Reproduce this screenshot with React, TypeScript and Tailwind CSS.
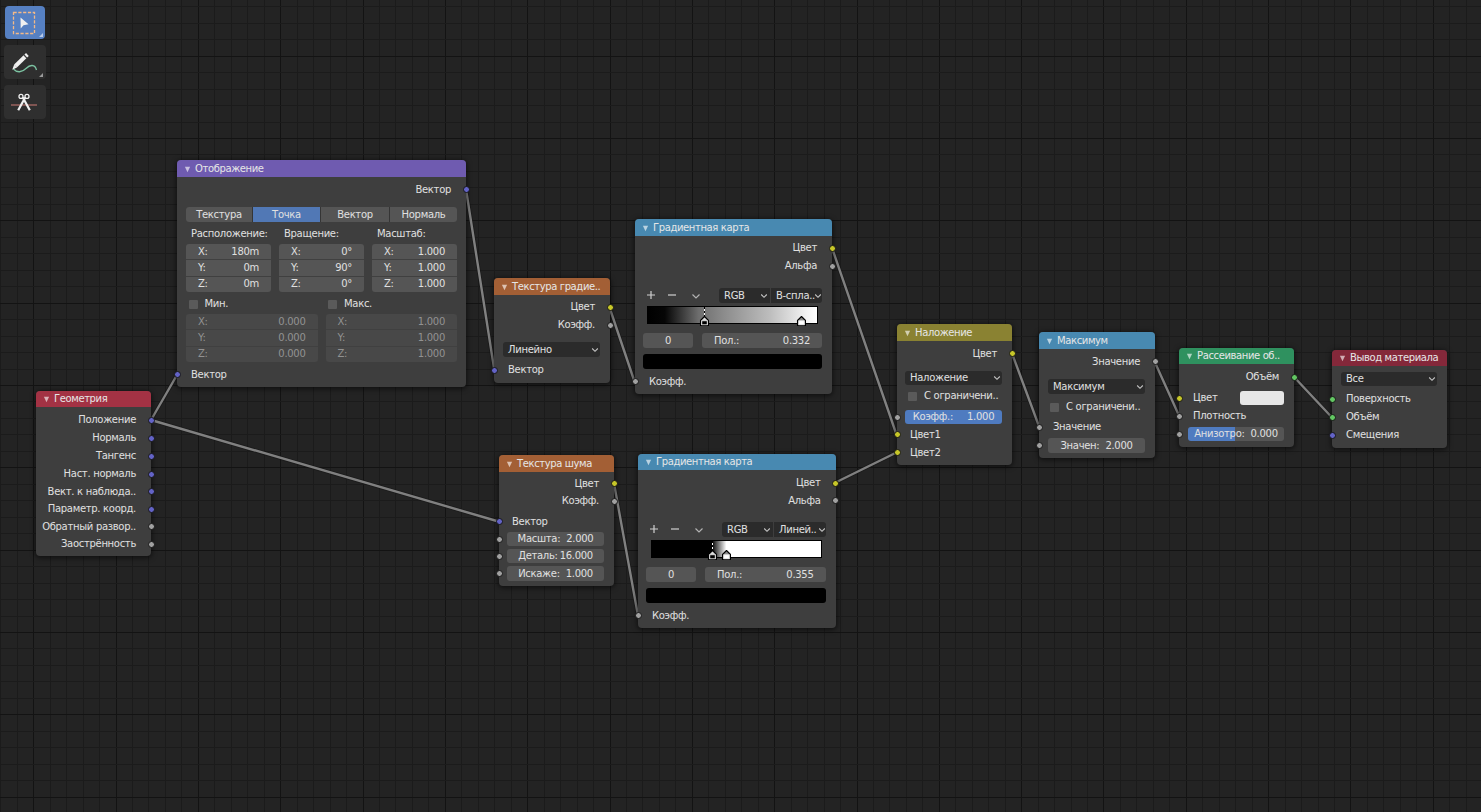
import type { ReactNode } from 'react';
import clsx from 'clsx';

const WIDTH = 1481;
const HEIGHT = 812;
const GRID = 82.33;

// socket colours
const VECTOR = 'bg-[#6363c7]';
const VALUE = 'bg-[#a1a1a1]';
const COLOR = 'bg-[#c7c729]';
const SHADER = 'bg-[#63c763]';

// [x1, y1, x2, y2] of every noodle
const links = [
  [151, 420, 177, 375],
  [151, 420, 498.5, 521.5],
  [466, 189.5, 494.5, 371],
  [609.5, 307.5, 634.5, 381.5],
  [614, 483.5, 638, 615.5],
  [832, 248, 896.5, 434.5],
  [835.5, 482.5, 896.5, 452.5],
  [1012, 353.5, 1039.5, 427.5],
  [1154.5, 361.5, 1179, 415.5],
  [1294.5, 377.5, 1332, 417.5],
];

function Grid() {
  const vertical = [];
  const horizontal = [];
  for (let i = -2; i <= 90; i++) {
    vertical.push({ p: Math.round(33.2 + (i * GRID) / 5), major: i % 5 === 0 });
    horizontal.push({ p: Math.round(55.7 + ((i - 5) * GRID) / 5), major: i % 5 === 0 });
  }
  return (
    <svg width={WIDTH} height={HEIGHT} className="absolute inset-0" shapeRendering="crispEdges">
      {vertical.map((l, i) => (
        <rect key={i} x={l.p} y={0} width={1} height={HEIGHT} fill={l.major ? '#131313' : '#1b1b1b'} />
      ))}
      {horizontal.map((l, i) => (
        <rect key={i} x={0} y={l.p} width={WIDTH} height={1} fill={l.major ? '#131313' : '#1b1b1b'} />
      ))}
    </svg>
  );
}

function Links() {
  return (
    <svg width={WIDTH} height={HEIGHT} className="absolute inset-0">
      {links.map(([x1, y1, x2, y2], i) => (
        <g key={i} strokeLinecap="round">
          <line x1={x1} y1={y1} x2={x2} y2={y2} stroke="#161616" strokeWidth={4} strokeOpacity={0.6} />
          <line x1={x1} y1={y1} x2={x2} y2={y2} stroke="#808080" strokeWidth={2.4} />
        </g>
      ))}
    </svg>
  );
}

function Node({ title, className, header, children }: { title: string; className: string; header: string; children: ReactNode }) {
  return (
    <div className={clsx('absolute flex flex-col rounded-[4px] bg-[#3e3e3e] shadow-[0_1px_5px_1px_rgba(0,0,0,0.55)]', className)}>
      <div className={clsx('flex shrink-0 items-center whitespace-nowrap rounded-t-[4px] pl-[7px] tracking-[-0.38px] text-[#e6e6e6]', header)}>
        <svg width="7" height="7" viewBox="0 0 7 7" className="mr-[4px] mt-px shrink-0">
          <path d="M0.9 0.8 H6.1 L3.5 6.2 Z" fill="#fff" fillOpacity="0.62" />
        </svg>
        {title}
      </div>
      {children}
    </div>
  );
}

function Socket({ side, color }: { side: 'left' | 'right'; color: string }) {
  return (
    <span
      className={clsx(
        'absolute top-1/2 -mt-[3.5px] size-[7px] rounded-full border border-[#161616]',
        side === 'left' ? '-left-[3.5px]' : '-right-[3.5px]',
        color
      )}
    />
  );
}

function Output({ label, color, className = 'h-[18px]' }: { label: string; color: string; className?: string }) {
  return (
    <div className={clsx('relative flex shrink-0 items-center justify-end whitespace-nowrap pr-[15px]', className)}>
      {label}
      <Socket side="right" color={color} />
    </div>
  );
}

function Input({ label, color, className = 'h-[18px]', children }: { label: string; color: string; className?: string; children?: ReactNode }) {
  return (
    <div className={clsx('relative flex shrink-0 items-center pl-[14px]', className)}>
      {label}
      {children}
      <Socket side="left" color={color} />
    </div>
  );
}

function Chevron({ className }: { className?: string }) {
  return (
    <svg width="8" height="6" viewBox="0 0 8 6" fill="none" className={clsx('shrink-0', className)}>
      <path d="M1.2 1.5 L4 4.3 L6.8 1.5" stroke="#c4c4c4" strokeWidth="1.1" />
    </svg>
  );
}

function Dropdown({ label, className }: { label: string; className: string }) {
  return (
    <div className={clsx('ml-[9px] mr-[10px] flex shrink-0 items-center justify-between rounded-[3px] bg-[#2b2b2b] pl-[5px] pr-px', className)}>
      {label}
      <Chevron />
    </div>
  );
}

function Checkbox({ label, className }: { label: string; className?: string }) {
  return (
    <div className={clsx('flex shrink-0 items-center whitespace-nowrap', className)}>
      <span className="mr-[7px] size-[9px] shrink-0 rounded-[1px] bg-[#5a5a5a]" />
      {label}
    </div>
  );
}

// Slider with its socket on the left edge of the node
function Slider({ label, value, className, field = 'bg-[#555555]' }: { label: string; value: string; className: string; field?: string }) {
  return (
    <div className={clsx('relative flex shrink-0 pl-[9px] pr-[10px]', className)}>
      <div className={clsx('flex grow items-center justify-center gap-[6px] whitespace-nowrap rounded-[3px]', field)}>
        <span>{label}</span>
        <span>{value}</span>
      </div>
      <Socket side="left" color={VALUE} />
    </div>
  );
}

function Vector({ values, disabled }: { values: string[]; disabled?: boolean }) {
  return (
    <div className="flex grow basis-0 flex-col gap-px overflow-hidden rounded-[3px] bg-[#404040]">
      {['X:', 'Y:', 'Z:'].map((axis, i) => (
        <div
          key={axis}
          className={clsx('flex h-[15.33px] items-center justify-between pl-[12px] pr-[12px]', disabled ? 'bg-[#484848] text-[#929292]' : 'bg-[#555555]')}
        >
          <span>{axis}</span>
          <span>{values[i]}</span>
        </div>
      ))}
    </div>
  );
}

function Marker({ fill, tip, line }: { fill: string; tip: string; line?: boolean }) {
  return (
    <svg width="10" height="20" viewBox="0 0 10 20" className="block">
      {line && <path d="M5.5 0 V10" stroke="#fff" strokeWidth="1" />}
      {line && <path d="M5.5 0 V10" stroke="#000" strokeWidth="1" strokeDasharray="2 2" />}
      <path d="M1.5 13.5 L5.5 9.5 L9.5 13.5 V18.5 H1.5 Z" fill={tip} stroke="#000" strokeWidth="1.1" strokeLinejoin="round" />
      <rect x="2.8" y="13.8" width="5.4" height="4" fill={fill} stroke="#e4e4e4" strokeWidth="0.8" />
    </svg>
  );
}

interface RampProps {
  className: string;
  header: string;
  alpha: string;
  bar: string;
  mode: string;
  gradient: string;
  stops: [string, string];
  position: string;
}

function ColorRamp({ className, header, alpha, bar, mode, gradient, stops, position }: RampProps) {
  return (
    <Node title="Градиентная карта" className={className} header={header}>
      <Output label="Цвет" color={COLOR} className="mt-[3px] h-[18px]" />
      <Output label="Альфа" color={VALUE} className={alpha} />
      <div className="mt-[13px] flex h-[15px] items-center pl-[11px] pr-[10px]">
        <svg width="62" height="11" viewBox="0 0 62 11" fill="none" stroke="#d0d0d0" strokeWidth="1.2" className="shrink-0">
          <path d="M1 5 H9 M5 1 V9" />
          <path d="M22 5 H30" />
          <path d="M46.5 4.5 L50 8 L53.5 4.5" strokeOpacity="0.8" />
        </svg>
        <div className="ml-[11px] flex h-[15px] grow gap-px overflow-hidden whitespace-nowrap rounded-[3px]">
          <div className="flex w-[51px] shrink-0 items-center justify-between bg-[#2b2b2b] pl-[5px] pr-[2px]">
            RGB
            <Chevron />
          </div>
          <div className="flex grow items-center justify-between bg-[#2b2b2b] pl-[5px]">
            {mode}
            <Chevron className="-ml-px" />
          </div>
        </div>
      </div>
      <div className={clsx('relative mt-[3px] h-[18px] w-[171px] shrink-0 border border-black', bar)} style={{ background: gradient }}>
        <span className={clsx('absolute top-0', stops[0])}>
          <Marker fill="#000" tip="#ddd" line />
        </span>
        <span className={clsx('absolute top-0', stops[1])}>
          <Marker fill="#fff" tip="#8a8a8a" />
        </span>
      </div>
      <div className="mt-[9px] flex h-[15px] gap-[9px] pl-[8px] pr-[10px]">
        <div className="flex w-[50px] items-center justify-center rounded-[3px] bg-[#555555]">0</div>
        <div className="flex grow items-center justify-between rounded-[3px] bg-[#555555] pl-[12px] pr-[12px]">
          <span>Пол.:</span>
          <span>{position}</span>
        </div>
      </div>
      <div className="ml-[8px] mr-[10px] mt-[6px] h-[15px] shrink-0 rounded-[3px] bg-black" />
      <Input label="Коэфф." color={VALUE} className="mt-[4px] h-[17px]" />
    </Node>
  );
}

function Toolbar() {
  return (
    <div className="relative flex w-[50px] flex-col items-center gap-[6px] pt-[6px]">
      <button className="h-[33px] w-[40px] rounded-[4px] bg-[#5680c2]">
        <svg width="40" height="33" viewBox="0 0 40 33">
          <rect x="8.5" y="6.5" width="21" height="21" fill="none" stroke="#f3b988" strokeWidth="1.3" strokeDasharray="3.2 1.6" />
          <path d="M15.5 11.5 L23.5 18.2 L18.5 19.2 L15.7 22.5 Z" fill="#f0f0f0" />
          <path d="M38 27 V31 H34 Z" fill="#b9cbe8" />
        </svg>
      </button>
      <button className="h-[34px] w-[42px] rounded-[4px] bg-[#2f2f2f]">
        <svg width="42" height="34" viewBox="0 0 42 34" fill="none">
          <path d="M9.5 24 C13 28 18 27.5 22 23.5 C26 19.5 31 19 32.5 25" stroke="#7cc3a2" strokeWidth="1.3" />
          <path d="M11.5 21 L21 11.8" stroke="#f0f0f0" strokeWidth="4" />
          <path d="M10.2 19.4 L13 22.6 L8.2 24.8 Z" fill="#f0f0f0" />
          <path d="M21.8 11 L23.4 9.5" stroke="#f0f0f0" strokeWidth="4" />
          <path d="M19.6 10.2 L22.4 13.2" stroke="#6a6a6a" strokeWidth="0.6" />
          <path d="M39 28 V32 H35 Z" fill="#9a9a9a" />
        </svg>
      </button>
      <button className="h-[34px] w-[42px] rounded-[4px] bg-[#2f2f2f]">
        <svg width="42" height="34" viewBox="0 0 42 34" fill="none">
          <path d="M7 20 H33" stroke="#b56f6b" strokeWidth="1.2" />
          <circle cx="17" cy="11.4" r="2" stroke="#f0f0f0" strokeWidth="1.3" />
          <circle cx="23" cy="11.4" r="2" stroke="#f0f0f0" strokeWidth="1.3" />
          <path d="M18.8 12.5 L25.8 25.2 M21.2 12.5 L14.2 25.2" stroke="#f0f0f0" strokeWidth="2.2" />
        </svg>
      </button>
    </div>
  );
}

function App() {
  return (
    <div className="relative h-[812px] w-[1481px] overflow-hidden bg-[#232323] font-['DejaVu_Sans',sans-serif] text-[10px] leading-none tracking-[-0.3px] text-[#e0e0e0]">
      <Grid />
      <Toolbar />
      <Links />

      {/* Geometry */}
      <Node title="Геометрия" className="left-[36px] top-[391px] h-[165px] w-[115px]" header="h-[16px] bg-[#a33244]">
        <Output label="Положение" color={VECTOR} className="mt-[4px] h-[18px]" />
        <Output label="Нормаль" color={VECTOR} />
        <Output label="Тангенс" color={VECTOR} />
        <Output label="Наст. нормаль" color={VECTOR} />
        <Output label="Вект. к наблюда.." color={VECTOR} className="h-[17.5px]" />
        <Output label="Параметр. коорд." color={VECTOR} className="h-[17.5px]" />
        <Output label="Обратный развор.." color={VALUE} className="h-[17.5px]" />
        <Output label="Заострённость" color={VALUE} className="h-[17.5px]" />
      </Node>

      {/* Mapping */}
      <Node title="Отображение" className="left-[177px] top-[160px] h-[227px] w-[289px]" header="h-[17px] bg-[#6f5bb0]">
        <Output label="Вектор" color={VECTOR} className="mt-[4px] h-[17px]" />
        <div className="mx-[9px] mt-[9px] flex h-[15px] gap-px overflow-hidden rounded-[3px] bg-[#353535]">
          <div className="flex w-[66px] items-center justify-center bg-[#555555]">Текстура</div>
          <div className="flex w-[67px] items-center justify-center bg-[#5178b5]">Точка</div>
          <div className="flex w-[68px] items-center justify-center bg-[#555555]">Вектор</div>
          <div className="flex grow items-center justify-center bg-[#555555]">Нормаль</div>
        </div>
        <div className="mx-[9px] mt-[5px] flex h-[14px] items-center gap-[8px]">
          <span className="grow basis-0 pl-[5px]">Расположение:</span>
          <span className="grow basis-0 pl-[5px]">Вращение:</span>
          <span className="grow basis-0 pl-[5px]">Масштаб:</span>
        </div>
        <div className="mx-[9px] mt-[3px] flex h-[48px] gap-[8px]">
          <Vector values={['180m', '0m', '0m']} />
          <Vector values={['0°', '90°', '0°']} />
          <Vector values={['1.000', '1.000', '1.000']} />
        </div>
        <div className="mx-[9px] flex h-[22px] gap-[8px] pt-[2px]">
          <Checkbox label="Мин." className="grow basis-0 pl-[2.5px]" />
          <Checkbox label="Макс." className="grow basis-0 pl-[2.5px]" />
        </div>
        <div className="mx-[9px] flex h-[48px] gap-[8px]">
          <Vector values={['0.000', '0.000', '0.000']} disabled />
          <Vector values={['1.000', '1.000', '1.000']} disabled />
        </div>
        <Input label="Вектор" color={VECTOR} className="mt-[4px] h-[17px]" />
      </Node>

      {/* Gradient texture */}
      <Node title="Текстура градие.." className="left-[494px] top-[278px] h-[105px] w-[116px]" header="h-[17px] bg-[#a35f35]">
        <Output label="Цвет" color={COLOR} className="mt-[3px] h-[18px]" />
        <Output label="Коэфф." color={VALUE} />
        <Dropdown label="Линейно" className="mt-[8px] h-[15px]" />
        <Input label="Вектор" color={VECTOR} className="mt-[4px] h-[18px]" />
      </Node>

      {/* Noise texture */}
      <Node title="Текстура шума" className="left-[499px] top-[455px] h-[131px] w-[115px]" header="h-[17px] bg-[#a35f35]">
        <Output label="Цвет" color={COLOR} className="mt-[3px] h-[17px]" />
        <Output label="Коэфф." color={VALUE} />
        <Input label="Вектор" color={VECTOR} className="mt-[3px] h-[17px] !pl-[13px]" />
        <Slider label="Масшта:" value="2.000" className="mt-[2px] h-[14px] !pl-[8px]" />
        <Slider label="Деталь:" value="16.000" className="mt-[3px] h-[14px] !pl-[8px]" field="bg-[#555555] !gap-[2px]" />
        <Slider label="Искаже:" value="1.000" className="mt-[3px] h-[15px] !pl-[8px]" />
      </Node>

      <ColorRamp
        className="left-[635px] top-[219px] h-[175px] w-[197px]"
        header="h-[17px] bg-[#4889b1]"
        alpha="h-[18px]"
        bar="ml-[12px]"
        mode="В-спла.."
        gradient="linear-gradient(to right, #000 0%, #060606 10%, #6e6e6e 30%, #8c8c8c 45%, #bdbdbd 72%, #f4f4f4 94%, #fff 100%)"
        stops={['left-[51px]', 'left-[148px]']}
        position="0.332"
      />
      <ColorRamp
        className="left-[638px] top-[454px] h-[174px] w-[197.5px]"
        header="h-[16px] mb-px bg-[#4889b1]"
        alpha="h-[17px]"
        bar="ml-[13px]"
        mode="Линей.."
        gradient="linear-gradient(to right, #000 35.5%, #fff 44%)"
        stops={['left-[55px]', 'left-[69px]']}
        position="0.355"
      />

      {/* Mix */}
      <Node title="Наложение" className="left-[897px] top-[324px] h-[141px] w-[115px]" header="h-[17px] bg-[#8a8232]">
        <Output label="Цвет" color={COLOR} className="mt-[4px] h-[17px]" />
        <Dropdown label="Наложение" className="mt-[9px] h-[14px] !ml-[8px]" />
        <Checkbox label="С ограничени.." className="mt-[2px] mb-px h-[18px] pl-[11px]" />
        <Slider label="Коэфф.:" value="1.000" className="mt-[4px] h-[14px] !pl-[8px]" field="bg-[#4f7bc0] !gap-[14px]" />
        <Input label="Цвет1" color={COLOR} className="mt-[2px] h-[17px] !pl-[13px]" />
        <Input label="Цвет2" color={COLOR} className="h-[19px] !pl-[13px]" />
      </Node>

      {/* Math */}
      <Node title="Максимум" className="left-[1039px] top-[332px] h-[126px] w-[116px]" header="h-[17px] bg-[#4889b1]">
        <Output label="Значение" color={VALUE} className="mt-[4px] h-[17px]" />
        <Dropdown label="Максимум" className="mt-[9px] h-[15px]" />
        <Checkbox label="С ограничени.." className="mt-[4px] h-[18px] pl-[11px]" />
        <Input label="Значение" color={VALUE} className="mt-[2px] h-[18px]" />
        <Slider label="Значен:" value="2.000" className="mt-[2px] h-[15px]" />
      </Node>

      {/* Volume scatter */}
      <Node title="Рассеивание об.." className="left-[1179px] top-[348px] h-[99px] w-[115px]" header="h-[16px] bg-[#2f915f]">
        <Output label="Объём" color={SHADER} className="mt-[4px] h-[18px]" />
        <Input label="Цвет" color={COLOR} className="mt-[3px] h-[18px]">
          <div className="ml-auto mr-[10px] h-[14px] w-[44px] rounded-[3px] bg-[#e7e7e7]" />
        </Input>
        <Input label="Плотность" color={VALUE} />
        <Slider
          label="Анизотро:"
          value="0.000"
          className="mt-[2px] h-[14px]"
          field="bg-[linear-gradient(to_right,#4f7bc0_48.5%,#555555_48.5%)]"
        />
      </Node>

      {/* Material output */}
      <Node title="Вывод материала" className="left-[1332px] top-[350px] h-[98px] w-[115px]" header="h-[16px] bg-[#84283a]">
        <Dropdown label="Все" className="mt-[6px] h-[14px]" />
        <Input label="Поверхность" color={SHADER} className="mt-[4px] h-[18px]" />
        <Input label="Объём" color={SHADER} />
        <Input label="Смещения" color={VECTOR} />
      </Node>
    </div>
  );
}

export default App;
